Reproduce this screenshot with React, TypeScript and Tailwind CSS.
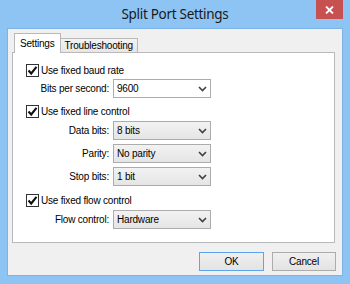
import React from "react";

const Chevron = () => (
  <svg width="9" height="6" viewBox="0 0 9 6" className="shrink-0">
    <path d="M1 1 L4.5 4.5 L8 1" fill="none" stroke="#404040" strokeWidth="1.6" />
  </svg>
);

const Check = () => (
  <div className="w-[13px] h-[13px] border border-[#333] bg-white flex items-center justify-center shrink-0">
    <svg width="11" height="11" viewBox="0 0 11 11">
      <path d="M1.5 5.5 L4.2 8.5 L9.5 1.8" fill="none" stroke="#111" strokeWidth="2.1" />
    </svg>
  </div>
);

const CheckRow = ({ label, mt }: { label: string; mt: string }) => (
  <div className={`flex items-center h-[13px] ${mt}`}>
    <Check />
    <span className="ml-[2px]">{label}</span>
  </div>
);

const Combo = ({ value, editable }: { value: string; editable?: boolean }) => (
  <div
    className={`w-[98px] h-[19px] border border-[#acacac] flex items-center justify-between pl-[3px] pr-[3px] ${
      editable ? "bg-white" : "bg-gradient-to-b from-[#f2f2f2] to-[#e5e5e5]"
    }`}
  >
    <span>{value}</span>
    <Chevron />
  </div>
);

const FieldRow = ({ label, value, editable, mt }: { label: string; value: string; editable?: boolean; mt: string }) => (
  <div className={`flex items-center ${mt}`}>
    <div className="w-[84px] text-right pr-[1px]">{label}</div>
    <div className="ml-[3px]">
      <Combo value={value} editable={editable} />
    </div>
  </div>
);

export default function App() {
  return (
    <div
      className="w-[350px] h-[284px] bg-[#8ec4f4] relative flex flex-col text-[10px] tracking-[-0.2px] text-black"
      style={{ fontFamily: '"Liberation Sans", Arial, sans-serif' }}
    >
      {/* title bar */}
      <div className="h-[28px] flex items-center justify-center shrink-0">
        <span
          className="text-[13.5px] tracking-[-0.3px] text-[#1a1a1a] mt-[1px]"
          style={{ fontFamily: '"Noto Sans", "Open Sans", sans-serif' }}
        >
          Split Port Settings
        </span>
      </div>
      <div className="absolute left-[316px] top-0 w-[27px] h-[19px] bg-[#c75050] flex items-center justify-center">
        <svg width="9" height="8" viewBox="0 0 9 8">
          <path d="M1 0.5 L8 7.5 M8 0.5 L1 7.5" stroke="white" strokeWidth="1.8" />
        </svg>
      </div>

      {/* client area */}
      <div className="mx-[7px] h-[248px] bg-[#f0f0f0] border border-[#7fb3e6] flex flex-col">
        {/* tabs */}
        <div className="flex items-end h-[19px] pl-[6px] mt-[4px]">
          <div className="relative z-10 h-[20px] px-[5px] bg-white border border-b-0 border-[#b9b9b9] flex items-center -mb-px">
            Settings
          </div>
          <div className="h-[14px] px-[4px] bg-gradient-to-b from-[#f3f3f3] to-[#e6e6e6] border border-l-0 border-b-0 border-[#b9b9b9] flex items-center">
            Troubleshooting
          </div>
        </div>
        {/* panel */}
        <div className="ml-[4px] w-[323px] h-[191px] bg-white border border-[#b9b9b9] flex flex-col pl-[13px] pt-[11px]">
          <CheckRow label="Use fixed baud rate" mt="" />
          <FieldRow label="Bits per second:" value="9600" editable mt="mt-[2px]" />
          <CheckRow label="Use fixed line control" mt="mt-[7px]" />
          <FieldRow label="Data bits:" value="8 bits" mt="mt-[3px]" />
          <FieldRow label="Parity:" value="No parity" mt="mt-[4px]" />
          <FieldRow label="Stop bits:" value="1 bit" mt="mt-[4px]" />
          <CheckRow label="Use fixed flow control" mt="mt-[8px]" />
          <FieldRow label="Flow control:" value="Hardware" mt="mt-[3px]" />
        </div>
        {/* buttons */}
        <div className="flex mt-[9px] pl-[191px] gap-[8px]">
          <div className="w-[65px] h-[19px] border border-[#5fa4ea] bg-gradient-to-b from-[#f0f0f0] to-[#e3e3e3] flex items-center justify-center">
            OK
          </div>
          <div className="w-[64px] h-[19px] border border-[#acacac] bg-gradient-to-b from-[#f0f0f0] to-[#e3e3e3] flex items-center justify-center">
            Cancel
          </div>
        </div>
      </div>
    </div>
  );
}
